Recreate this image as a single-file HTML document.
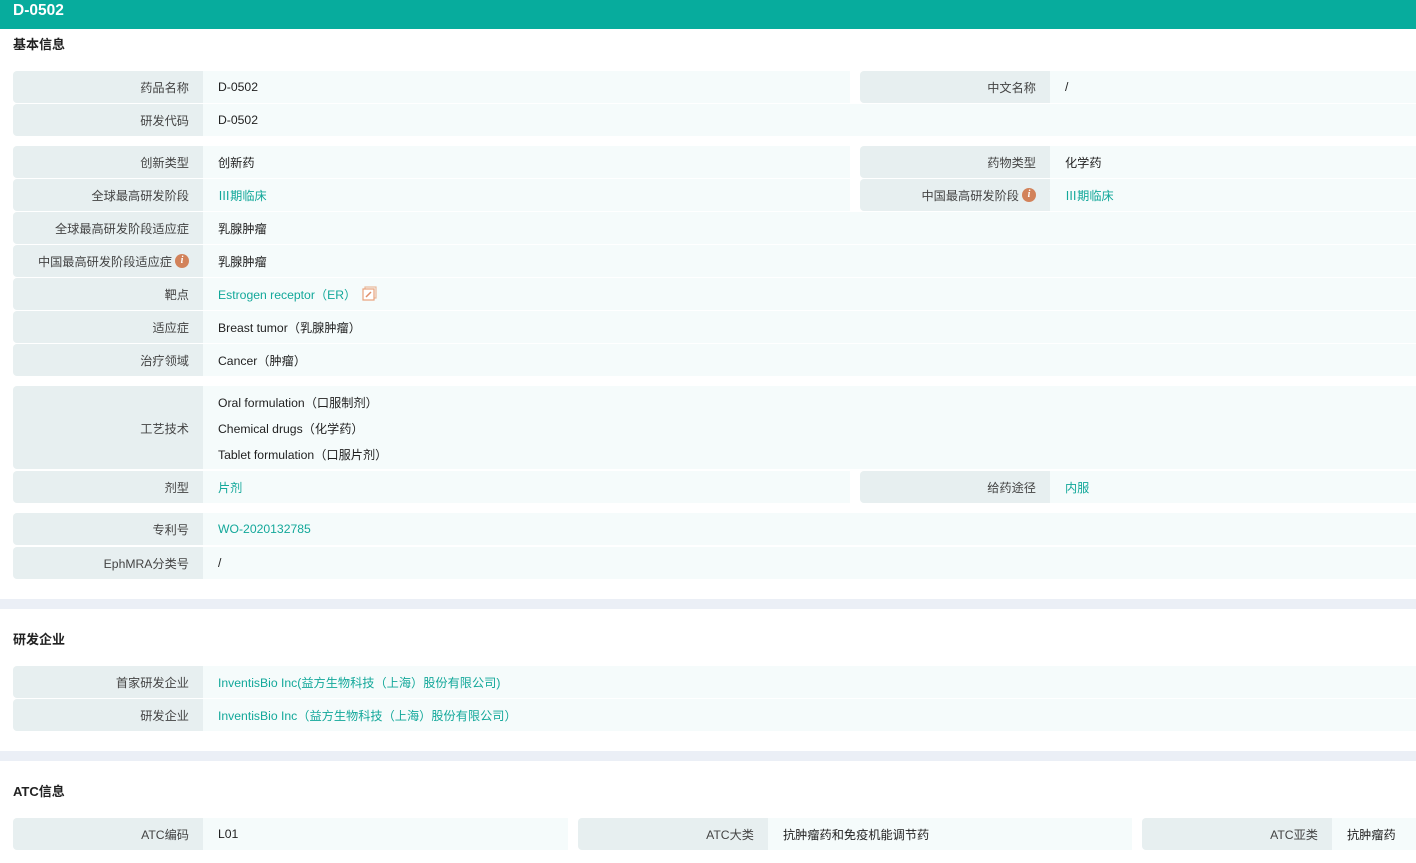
<!DOCTYPE html>
<html><head><meta charset="utf-8"><style>
*{margin:0;padding:0;box-sizing:border-box}
body{width:1416px;height:863px;position:relative;overflow:hidden;background:#fff;font-family:"Liberation Sans","Noto Sans CJK SC",sans-serif;font-size:12.2px;color:#222}
.hd{position:absolute;left:0;top:0;width:1416px;height:29px;background:#07ac9d;color:#fff;font-weight:bold;font-size:15.5px;line-height:22px;padding-left:13px}
.t{position:absolute;left:13px;font-weight:bold;font-size:13px;color:#222}
.l{position:absolute;background:#e7eff0;border-radius:4px 0 0 4px;text-align:right;padding-right:14px;color:#444;display:flex;align-items:center;justify-content:flex-end}
.v{position:absolute;background:#f5fbfb;padding-left:15px;display:flex;align-items:center}
.g{color:#13a89a}
.band{position:absolute;left:0;width:1416px;height:10px;background:#ebeff6}
.i{display:inline-block;width:14px;height:14px;border-radius:50%;background:#d2825a;color:#fff;font-size:10px;font-style:italic;font-weight:bold;text-align:center;line-height:14px;margin-left:3px;font-family:"Liberation Serif",serif}
</style></head><body>
<div class="hd">D-0502</div>
<div class="t" style="top:34px">基本信息</div>

<div class="l" style="left:13px;top:71px;width:190px;height:32px">药品名称</div><div class="v" style="left:203px;top:71px;width:647px;height:32px">D-0502</div>
<div class="l" style="left:860px;top:71px;width:190px;height:32px">中文名称</div><div class="v" style="left:1050px;top:71px;width:366px;height:32px">/</div>
<div class="l" style="left:13px;top:104px;width:190px;height:32px">研发代码</div><div class="v" style="left:203px;top:104px;width:1213px;height:32px">D-0502</div>

<div class="l" style="left:13px;top:146px;width:190px;height:32px">创新类型</div><div class="v" style="left:203px;top:146px;width:647px;height:32px">创新药</div>
<div class="l" style="left:860px;top:146px;width:190px;height:32px">药物类型</div><div class="v" style="left:1050px;top:146px;width:366px;height:32px">化学药</div>
<div class="l" style="left:13px;top:179px;width:190px;height:32px">全球最高研发阶段</div><div class="v g" style="left:203px;top:179px;width:647px;height:32px">Ⅲ期临床</div>
<div class="l" style="left:860px;top:179px;width:190px;height:32px">中国最高研发阶段<span class="i">i</span></div><div class="v g" style="left:1050px;top:179px;width:366px;height:32px">Ⅲ期临床</div>
<div class="l" style="left:13px;top:212px;width:190px;height:32px">全球最高研发阶段适应症</div><div class="v" style="left:203px;top:212px;width:1213px;height:32px">乳腺肿瘤</div>
<div class="l" style="left:13px;top:245px;width:190px;height:32px">中国最高研发阶段适应症<span class="i">i</span></div><div class="v" style="left:203px;top:245px;width:1213px;height:32px">乳腺肿瘤</div>
<div class="l" style="left:13px;top:278px;width:190px;height:32px">靶点</div><div class="v g" style="left:203px;top:278px;width:1213px;height:32px">Estrogen receptor（ER）<svg width="16" height="16" viewBox="0 0 16 16" style="margin-left:6px"><rect x="3" y="1" width="11" height="11" fill="none" stroke="#e8b89a" stroke-width="1.2"/><rect x="1" y="3" width="11" height="11" fill="#fff" stroke="#e8a27c" stroke-width="1.2"/><path d="M4 11 L9 6" stroke="#e08e6a" stroke-width="1.5"/></svg></div>
<div class="l" style="left:13px;top:311px;width:190px;height:32px">适应症</div><div class="v" style="left:203px;top:311px;width:1213px;height:32px">Breast tumor（乳腺肿瘤）</div>
<div class="l" style="left:13px;top:344px;width:190px;height:32px">治疗领域</div><div class="v" style="left:203px;top:344px;width:1213px;height:32px">Cancer（肿瘤）</div>

<div class="l" style="left:13px;top:386px;width:190px;height:83px">工艺技术</div><div class="v" style="left:203px;top:386px;width:1213px;height:83px;display:block;padding-top:4px;line-height:26px">Oral formulation（口服制剂）<br>Chemical drugs（化学药）<br>Tablet formulation（口服片剂）</div>
<div class="l" style="left:13px;top:471px;width:190px;height:32px">剂型</div><div class="v g" style="left:203px;top:471px;width:647px;height:32px">片剂</div>
<div class="l" style="left:860px;top:471px;width:190px;height:32px">给药途径</div><div class="v g" style="left:1050px;top:471px;width:366px;height:32px">内服</div>

<div class="l" style="left:13px;top:513px;width:190px;height:32px">专利号</div><div class="v g" style="left:203px;top:513px;width:1213px;height:32px">WO-2020132785</div>
<div class="l" style="left:13px;top:547px;width:190px;height:32px">EphMRA分类号</div><div class="v" style="left:203px;top:547px;width:1213px;height:32px">/</div>

<div class="band" style="top:599px"></div>
<div class="t" style="top:629px">研发企业</div>
<div class="l" style="left:13px;top:666px;width:190px;height:32px">首家研发企业</div><div class="v g" style="left:203px;top:666px;width:1213px;height:32px">InventisBio Inc(益方生物科技（上海）股份有限公司)</div>
<div class="l" style="left:13px;top:699px;width:190px;height:32px">研发企业</div><div class="v g" style="left:203px;top:699px;width:1213px;height:32px">InventisBio Inc（益方生物科技（上海）股份有限公司）</div>

<div class="band" style="top:751px"></div>
<div class="t" style="top:781px">ATC信息</div>
<div class="l" style="left:13px;top:818px;width:190px;height:32px">ATC编码</div><div class="v" style="left:203px;top:818px;width:365px;height:32px">L01</div>
<div class="l" style="left:578px;top:818px;width:190px;height:32px">ATC大类</div><div class="v" style="left:768px;top:818px;width:364px;height:32px">抗肿瘤药和免疫机能调节药</div>
<div class="l" style="left:1142px;top:818px;width:190px;height:32px">ATC亚类</div><div class="v" style="left:1332px;top:818px;width:84px;height:32px">抗肿瘤药</div>
</body></html>
